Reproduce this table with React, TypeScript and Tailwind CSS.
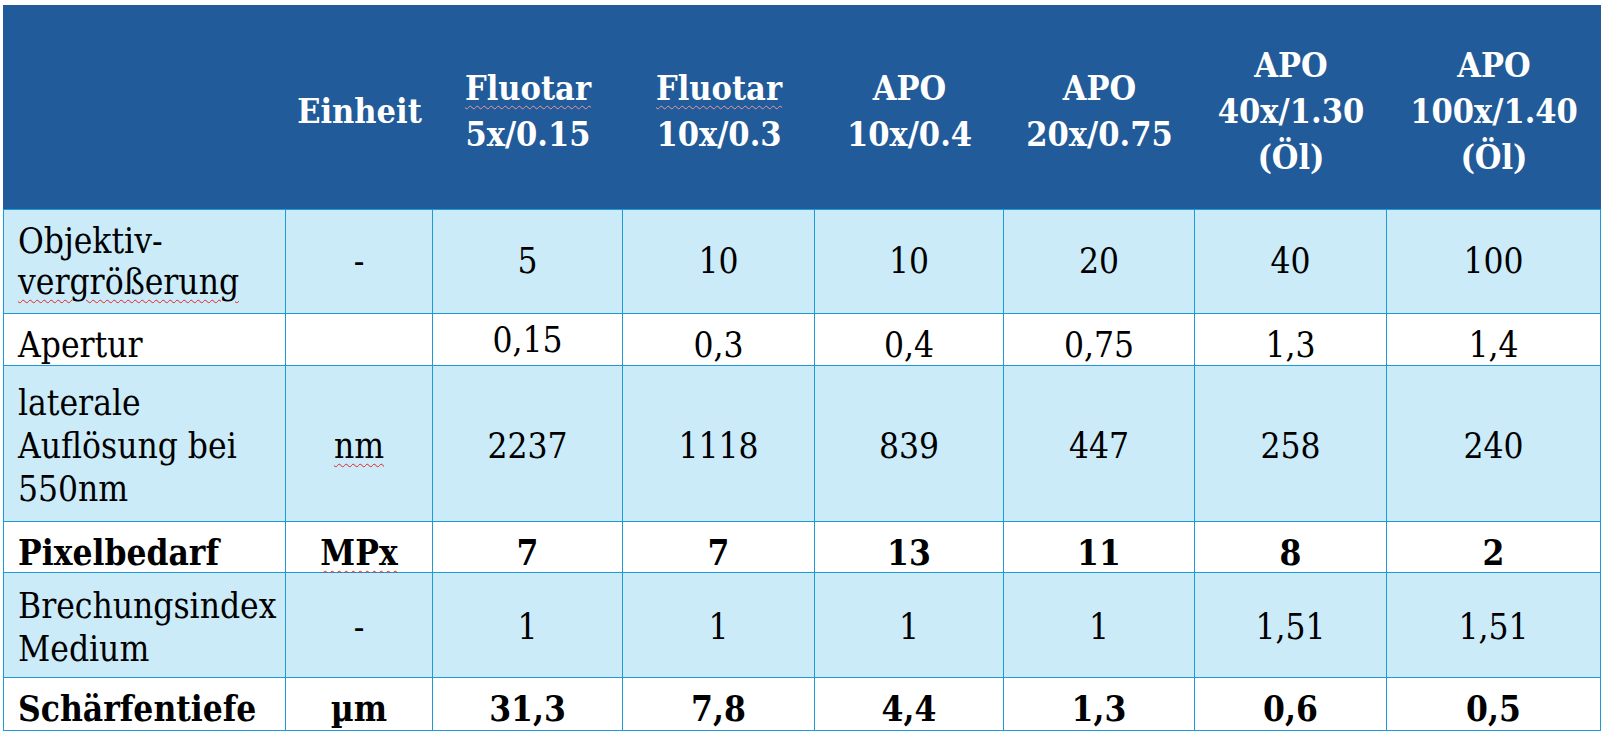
import React from 'react'

type Row = {
  label: string[]
  squiggleLine?: number
  unit: string
  unitSquiggle?: boolean
  values: string[]
  light: boolean
  bold?: boolean
  single?: boolean
}

const rows: Row[] = [
  {
    label: ['Objektiv-', 'vergrößerung'],
    squiggleLine: 1,
    unit: '-',
    values: ['5', '10', '10', '20', '40', '100'],
    light: true,
  },
  {
    label: ['Apertur'],
    unit: '',
    values: ['0,15', '0,3', '0,4', '0,75', '1,3', '1,4'],
    light: false,
    single: true,
  },
  {
    label: ['laterale', 'Auflösung bei', '550nm'],
    unit: 'nm',
    unitSquiggle: true,
    values: ['2237', '1118', '839', '447', '258', '240'],
    light: true,
  },
  {
    label: ['Pixelbedarf'],
    unit: 'MPx',
    unitSquiggle: true,
    values: ['7', '7', '13', '11', '8', '2'],
    light: false,
    bold: true,
    single: true,
  },
  {
    label: ['Brechungsindex', 'Medium'],
    unit: '-',
    values: ['1', '1', '1', '1', '1,51', '1,51'],
    light: true,
  },
  {
    label: ['Schärfentiefe'],
    unit: 'µm',
    values: ['31,3', '7,8', '4,4', '1,3', '0,6', '0,5'],
    light: false,
    bold: true,
    single: true,
  },
]

const headers: { lines: string[]; squiggle?: boolean }[] = [
  { lines: ['Fluotar', '5x/0.15'], squiggle: true },
  { lines: ['Fluotar', '10x/0.3'], squiggle: true },
  { lines: ['APO', '10x/0.4'] },
  { lines: ['APO', '20x/0.75'] },
  { lines: ['APO', '40x/1.30', '(Öl)'] },
  { lines: ['APO', '100x/1.40', '(Öl)'] },
]

const squiggle = 'underline decoration-wavy decoration-[#e02424] decoration-1 underline-offset-[5px]'

export default function App() {
  return (
    <main className="min-h-screen bg-white pt-[5px] pl-[3px] font-['DejaVu_Serif',serif] font-stretch-condensed">
      <div className="grid w-[1598px] grid-cols-[283px_147px_190px_192px_189px_191px_192px_214px] grid-rows-[204px_105px_52px_156px_51px_105px_53px]">
        {/* header */}
        <div className="bg-[#225b99]" />
        <div className="flex items-center justify-center bg-[#225b99] pt-[8px] text-[34px] leading-[46px] font-bold text-white">
          Einheit
        </div>
        {headers.map((h, i) => (
          <div
            key={i}
            className="flex flex-col items-center justify-center bg-[#225b99] pt-[8px] text-center text-[34px] leading-[46px] font-bold text-white"
          >
            {h.lines.map((l, j) => (
              <span
                key={j}
                className={
                  h.squiggle && j === 0
                    ? 'underline decoration-wavy decoration-[#e899a4] decoration-1 underline-offset-[5px]'
                    : ''
                }
              >
                {l}
              </span>
            ))}
          </div>
        ))}

        {/* body */}
        {rows.map((r, ri) => {
          const bg = r.light ? 'bg-[#cbebf9]' : 'bg-white'
          const top = ri === 0 ? 'border-t' : ''
          const weight = r.bold ? 'font-bold' : 'font-normal'
          const line = r.single ? 'leading-[36px]' : ri === 0 ? 'leading-[41px]' : 'leading-[43px]'
          const align = r.single ? 'items-end' : ri === 0 ? 'items-center' : 'items-center pt-[5px]'
          const pad = ri === 5 ? 'pb-[3px]' : ri === 1 ? 'pb-[2px]' : ri === 3 ? 'pb-[1px]' : ''
          return (
            <React.Fragment key={ri}>
              <div
                className={`flex ${align} ${pad} ${bg} ${top} border-r border-b border-l border-[#1e9ad6] pl-[14px] text-[35px] ${line} ${weight} whitespace-nowrap text-black`}
              >
                <div className="flex flex-col">
                  {r.label.map((l, li) => (
                    <span key={li} className={r.squiggleLine === li ? squiggle : ''}>
                      {l}
                    </span>
                  ))}
                </div>
              </div>
              <div
                className={`flex ${align} ${pad} justify-center ${bg} ${top} border-r border-b border-[#1e9ad6] text-[35px] ${line} ${weight} text-black`}
              >
                <span className={r.unitSquiggle ? squiggle : ''}>{r.unit}</span>
              </div>
              {r.values.map((v, vi) => (
                <div
                  key={vi}
                  className={`flex ${align} justify-center ${bg} ${top} border-r border-b border-[#1e9ad6] text-[35px] ${line} ${weight} text-black ${
                    ri === 1 && vi === 0 ? 'pb-[7px]' : pad
                  }`}
                >
                  {v}
                </div>
              ))}
            </React.Fragment>
          )
        })}
      </div>
    </main>
  )
}
